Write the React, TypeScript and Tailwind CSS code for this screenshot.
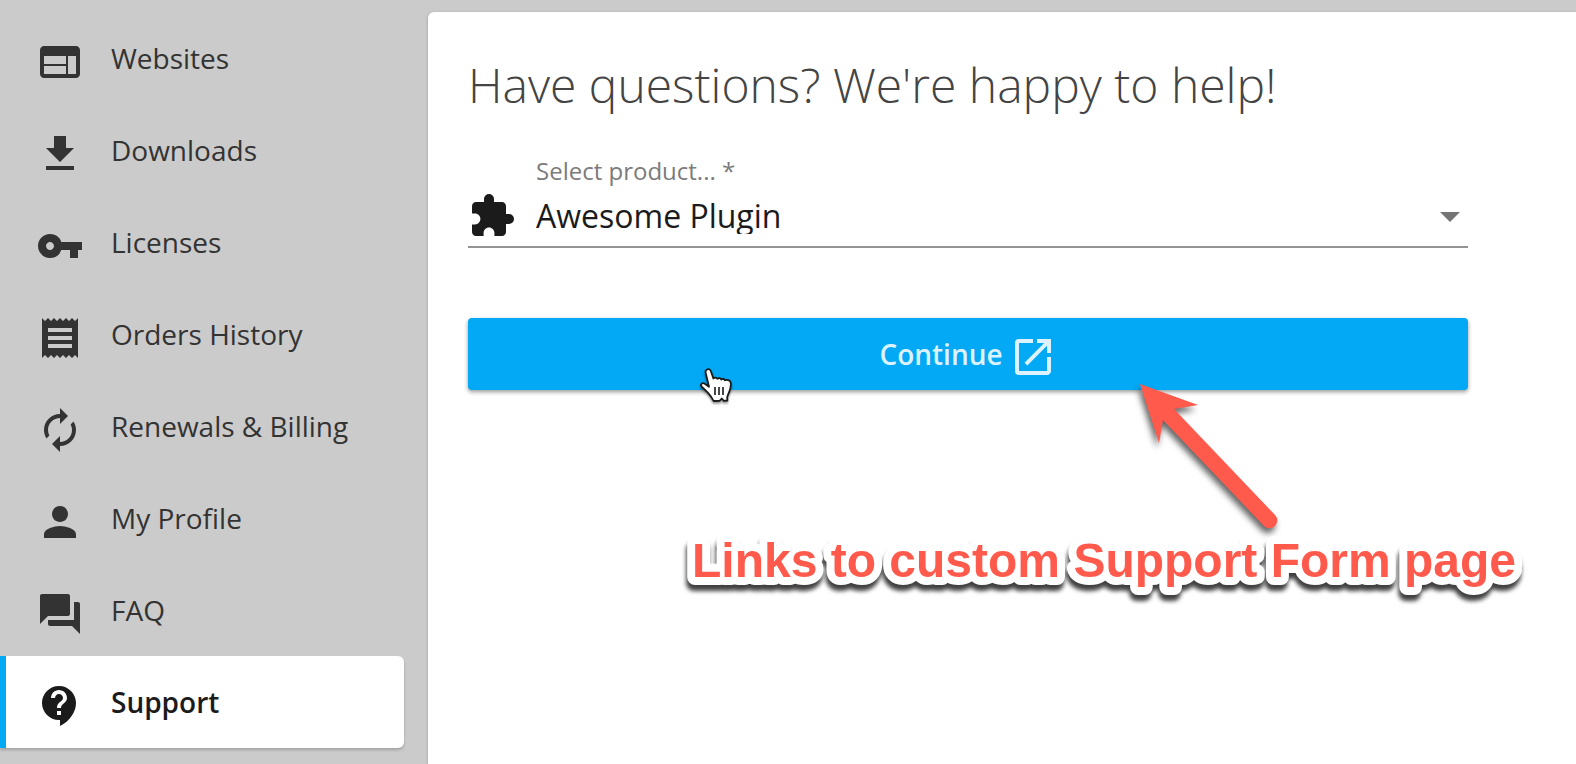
import React, { useState } from "react";
import type { IconType } from "react-icons";
import {
  MdAutorenew,
  MdArrowDropDown,
  MdContactSupport,
  MdExtension,
  MdFileDownload,
  MdOpenInNew,
  MdPerson,
  MdQuestionAnswer,
  MdReceipt,
  MdVpnKey,
  MdWeb,
} from "react-icons/md";

interface NavItem {
  label: string;
  icon: IconType;
}

const navItems: NavItem[] = [
  { label: "Websites", icon: MdWeb },
  { label: "Downloads", icon: MdFileDownload },
  { label: "Licenses", icon: MdVpnKey },
  { label: "Orders History", icon: MdReceipt },
  { label: "Renewals & Billing", icon: MdAutorenew },
  { label: "My Profile", icon: MdPerson },
  { label: "FAQ", icon: MdQuestionAnswer },
  { label: "Support", icon: MdContactSupport },
];

const Sidebar: React.FC = () => {
  const [active, setActive] = useState<string>("Support");

  return (
    <nav className="w-[404px] shrink-0 pt-3">
      {navItems.map(({ label, icon: Icon }) => {
        const isActive = label === active;
        return (
          <a
            key={label}
            href="#"
            onClick={() => setActive(label)}
            className={
              isActive
                ? "flex h-[92px] items-center gap-[27px] rounded-r-md border-l-6 border-[#03a9f4] bg-white pl-[30px] text-[28px] font-semibold text-[#1b1b1b] shadow-[0_2px_3px_rgba(0,0,0,0.2)]"
                : "flex h-[92px] items-center gap-[27px] border-l-6 border-transparent pl-[30px] text-[28px] text-[#333333]"
            }
          >
            <Icon className="mt-2 size-12 shrink-0" />
            {label}
          </a>
        );
      })}
    </nav>
  );
};

const ProductSelect: React.FC = () => {
  const [product, setProduct] = useState<string>("Awesome Plugin");

  return (
    <div className="flex items-end border-b-2 border-[#949494] pb-1.5">
      <MdExtension className="mr-5 size-12 shrink-0 text-[#1b1b1b]" />
      <div className="relative flex-1 pb-1.5">
        <label htmlFor="product" className="block text-[24px] leading-[26px] text-[#7b7b7b]">
          Select product... *
        </label>
        <select
          id="product"
          value={product}
          onChange={(e) => setProduct(e.target.value)}
          className="mt-3.5 block h-9 w-full appearance-none bg-transparent text-[32px] leading-9 text-[#1b1b1b] outline-none"
        >
          <option value="Awesome Plugin">Awesome Plugin</option>
        </select>
        <MdArrowDropDown className="pointer-events-none absolute right-[-6px] bottom-0 size-12 text-[#757575]" />
      </div>
    </div>
  );
};

const HandCursor: React.FC = () => (
  <svg
    viewBox="0 0 36 38"
    className="pointer-events-none absolute top-12 left-[230px] h-[38px] w-9 drop-shadow-[0_2px_1px_rgba(0,0,0,0.4)]"
  >
    <path
      d="M9 3.5c1.5-1 3.2-.2 3.8 1.5l2.6 7.5c1-1.4 3.2-1.2 4 .3 1.2-1 3.2-.8 3.9.7 1.2-1 3-.6 3.7.8 1.8-.9 5-.2 5.6 2 .8 3-.2 6.5-1.4 9.5-.8 2-1.7 3.8-2 5.7l.2 3-3.6.3-2-2.3-2.2 2.3-6 .2c-1.5-3.3-3.5-6-6-8.7L3.5 20.5c-1.5-2 .6-4.300 2.900-3l4.600 3.200L7.700 7c-.5-1.500 0-2.800 1.300-3.500z"
      fill="#fff"
      stroke="#1a1a1a"
      strokeWidth="1.8"
      strokeLinejoin="round"
    />
    <path d="M17 21v8M21 21v8M25 21v8" stroke="#1a1a1a" strokeWidth="1.6" />
  </svg>
);

// arrow and caption drawn on top of the page
const Callout: React.FC = () => (
  <svg
    viewBox="0 0 860 230"
    className="pointer-events-none absolute top-[62px] left-[200px] h-[230px] w-[860px] overflow-visible"
  >
    <path
      d="M472 4l58 21-24 4L607 135a7.500 7.500 0 0 1-11 11L495 40l-4 23z"
      fill="#ff5a4c"
      className="drop-shadow-[-2px_5px_3px_rgba(0,0,0,0.6)]"
    />
    <text
      x="24"
      y="197"
      fill="#ff5a4c"
      stroke="#fff"
      strokeWidth="16"
      strokeLinejoin="round"
      paintOrder="stroke"
      className="font-['Liberation_Sans',sans-serif] text-[48px] font-bold drop-shadow-[-1px_6px_2px_rgba(0,0,0,0.75)]"
    >
      Links to custom Support Form page
    </text>
  </svg>
);

const App: React.FC = () => {
  return (
    <div className="flex min-h-screen overflow-hidden bg-[#cbcbcb] font-['Open_Sans',sans-serif]">
      <Sidebar />
      <main className="mt-3 ml-6 flex-1 rounded-tl-md bg-white pt-10 pr-[108px] pl-10 shadow-[0_1px_3px_rgba(0,0,0,0.25)]">
        <h1 className="text-[48px] leading-[66px] font-light text-[#444444]">
          Have questions? We're happy to help!
        </h1>
        <div className="mt-10">
          <ProductSelect />
        </div>
        <div className="relative mt-[70px]">
          <button
            type="button"
            className="flex h-[72px] w-full items-center justify-center gap-1.5 rounded bg-[#03a9f4] text-[28px] font-semibold text-[#dcf2fe] shadow-[0_2px_4px_rgba(0,0,0,0.4)]"
          >
            Continue
            <MdOpenInNew className="mt-1.5 size-12" />
          </button>
          <HandCursor />
          <Callout />
        </div>
      </main>
    </div>
  );
};

export default App;
